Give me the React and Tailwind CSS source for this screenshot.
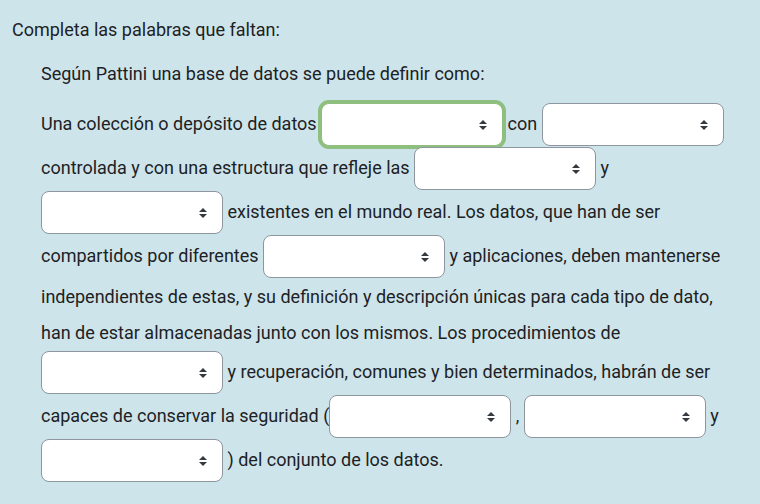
import React from 'react';

const Gap = ({ focused = false }) => (
  <span className="relative inline-block align-middle mb-px">
    <select
      className={
        'block h-[43px] w-[182px] appearance-none rounded-lg border bg-white pl-3 pr-8 outline-none ' +
        (focused ? 'border-[#8fbf7f] ring-[3px] ring-[#8fbf7f]' : 'border-[#8f959e]')
      }
      defaultValue=""
    >
      <option value=""></option>
    </select>
    <svg
      className="pointer-events-none absolute right-4 top-1/2 -translate-y-1/2"
      width="8"
      height="10"
      viewBox="0 0 4 5"
    >
      <path d="M2 0L0 2h4zm0 5L0 3h4z" fill="#343a40" />
    </svg>
  </span>
);

export default function App() {
  return (
    <div
      className="min-h-screen bg-[#cde5ea] text-[18px] leading-9 text-[#1d2125]"
      style={{ fontFamily: 'Roboto, "Liberation Sans", sans-serif' }}
    >
      <div className="pl-3 pr-5 pt-3">
        <p>Completa las palabras que faltan:</p>
        <div className="mt-2 pl-[29px]">
          <p>Según Pattini una base de datos se puede definir como:</p>
          <p className="mt-[11px]">
            Una colección o depósito de datos <Gap focused /> con <Gap /> controlada y con una estructura que
            refleje las <Gap /> y <Gap /> existentes en el mundo real. Los datos, que han de ser compartidos
            por diferentes <Gap /> y aplicaciones, deben mantenerse independientes de estas, y su definición y
            descripción únicas para cada tipo de dato, han de estar almacenadas junto con los mismos. Los
            procedimientos de <Gap /> y recuperación, comunes y bien determinados, habrán de ser capaces de
            conservar la seguridad (<Gap /> , <Gap /> y <Gap /> ) del conjunto de los datos.
          </p>
        </div>
      </div>
    </div>
  );
}
